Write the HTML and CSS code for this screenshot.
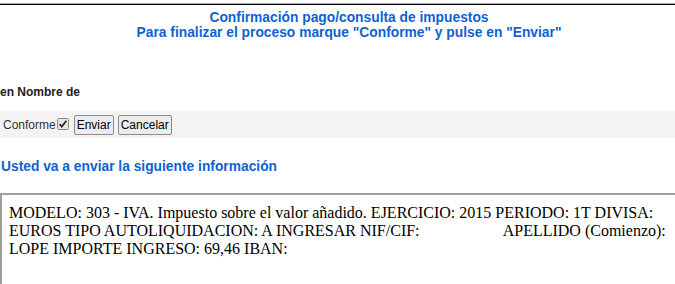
FILE: index.html
```html
<!DOCTYPE html>
<html lang="es">
<head>
<meta charset="utf-8">
<link rel="stylesheet" href="styles.css">
</head>
<body>
<div class="page">
  <div class="rule"></div>
  <div class="title">
    <div>Confirmación pago/consulta de impuestos</div>
    <div>Para finalizar el proceso marque "Conforme" y pulse en "Enviar"</div>
  </div>
  <div class="nombre">en Nombre de</div>
  <form class="bar">
    <span class="conf">Conforme</span>
    <span class="chk"><svg width="12" height="12" viewBox="0 0 12 12"><rect x="0.5" y="0.5" width="11" height="11" rx="1" fill="#e6e6e6" stroke="#8a8a8a"/><path d="M2.6 6.2 L4.8 8.6 L9.4 2.8" fill="none" stroke="#2b2b2b" stroke-width="1.8"/></svg></span>
    <button type="button" class="btn first">Enviar</button>
    <button type="button" class="btn">Cancelar</button>
  </form>
  <div class="sub">Usted va a enviar la siguiente información</div>
  <div class="box">MODELO: 303 - IVA. Impuesto sobre el valor añadido. EJERCICIO: 2015 PERIODO: 1T DIVISA: EUROS TIPO AUTOLIQUIDACION: A INGRESAR NIF/CIF: &nbsp;&nbsp;&nbsp;&nbsp;&nbsp;&nbsp;&nbsp;&nbsp;&nbsp;&nbsp;&nbsp;&nbsp;&nbsp;&nbsp;&nbsp;&nbsp;&nbsp;&nbsp;&nbsp; APELLIDO (Comienzo): LOPE IMPORTE INGRESO: 69,46 IBAN:</div>
</div>
</body>
</html>
```

FILE: styles.css
```css
html, body {
  margin: 0;
  padding: 0;
  background: #fff;
  overflow: hidden;
}
.page {
  width: 698px;
  font-family: "Liberation Sans", Arial, sans-serif;
}
.rule {
  margin-top: 3px;
  height: 0;
  border-top: 1px solid #ababab;
  border-bottom: 1px solid #000;
}
.title {
  text-align: center;
  color: #0f62d2;
  font-weight: bold;
  font-size: 13.8px;
  line-height: 15px;
  padding-top: 5px;
}
.nombre {
  margin-top: 45px;
  font-size: 12px;
  font-weight: bold;
  color: #222;
  line-height: 14px;
}
.bar {
  margin: 12px 0 0 0;
  background: #f3f3f3;
  height: 27px;
  display: flex;
  align-items: center;
  padding-left: 3px;
  font-size: 12px;
  color: #333;
}
.chk {
  display: flex;
  margin-left: 1px;
  margin-top: -1px;
}
.btn {
  font-family: "Liberation Sans", Arial, sans-serif;
  font-size: 12px;
  color: #000;
  background: #ececec;
  border: 1px solid #8c8c8c;
  border-radius: 2px;
  padding: 0 2px;
  height: 20px;
  margin-left: 4px;
}
.btn.first { margin-left: 5px; }
.sub {
  margin-top: 21px;
  padding-left: 1px;
  color: #0f62d2;
  font-weight: bold;
  font-size: 13.8px;
  line-height: 16px;
}
.box {
  margin-top: 18px;
  border-top: 2px solid #a0a0a0;
  border-left: 2px solid #a0a0a0;
  height: 120px;
  padding: 9px 0 0 7px;
  font-family: "Liberation Serif", "Times New Roman", serif;
  font-size: 16px;
  line-height: 18px;
  color: #000;
  width: 690px;
}
```
